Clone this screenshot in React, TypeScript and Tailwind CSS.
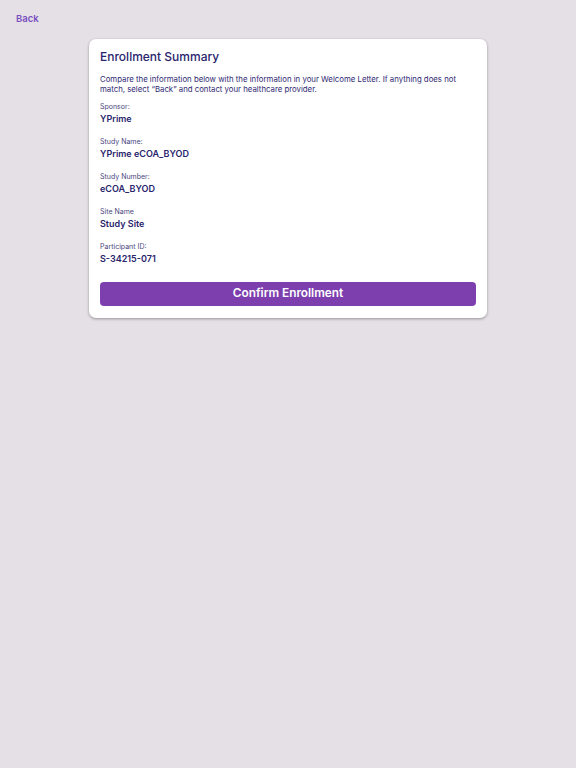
export default function App() {
  const fields = [
    { label: 'Sponsor:', value: 'YPrime' },
    { label: 'Study Name:', value: 'YPrime eCOA_BYOD' },
    { label: 'Study Number:', value: 'eCOA_BYOD' },
    { label: 'Site Name', value: 'Study Site' },
    { label: 'Participant ID:', value: 'S-34215-071' },
  ]

  return (
    <div className="min-h-[768px] w-full bg-[#e4e0e6] font-['Inter','Noto_Sans',sans-serif]">
      <div className="flex items-start px-4 pt-[13px] h-[39px]">
        <span className="block text-[9.5px] leading-3 font-semibold text-[#7b4fc0]">Back</span>
      </div>

      <div className="mx-auto w-[398px] bg-white rounded-[7px] shadow-[0_1px_3px_rgba(0,0,0,0.35)] px-[11px] pt-[10px] pb-[12px]">
        <h1 className="text-[12px] leading-4 font-medium text-[#29246c]">Enrollment Summary</h1>
        <p className="mt-[9px] text-[7.8px] leading-[10px] text-[#2f2a74]">
          Compare the information below with the information in your Welcome Letter. If anything does not match, select “Back” and contact your healthcare provider.
        </p>

        <div className="mt-[8px] flex flex-col gap-[12px]">
          {fields.map((f) => (
            <div key={f.label} className="flex flex-col gap-[1px]">
              <span className="text-[7px] leading-[10px] text-[#4a4680]">{f.label}</span>
              <span className="text-[9px] leading-3 font-semibold text-[#29246c]">{f.value}</span>
            </div>
          ))}
        </div>

        <button className="mt-[17px] w-full h-6 rounded bg-[#7d3fae] text-white text-[11.8px] font-semibold">
          Confirm Enrollment
        </button>
      </div>
    </div>
  )
}
